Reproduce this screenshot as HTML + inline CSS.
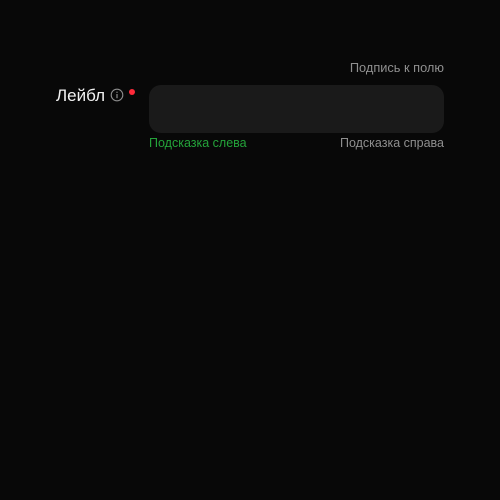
<!DOCTYPE html>
<html><head><meta charset="utf-8"><style>
html,body{margin:0;padding:0;background:#080808;width:500px;height:500px;overflow:hidden;font-family:"Liberation Sans","DejaVu Sans",sans-serif;}
.t{position:absolute;white-space:nowrap;}
</style></head><body>
<div class="t" style="right:56px;top:60px;font-size:12.8px;color:#8f8f8f;">Подпись к полю</div>
<div class="t" style="left:56px;top:86px;font-size:17px;color:#f2f2f2;">Лейбл</div>
<svg style="position:absolute;left:110px;top:88px" width="14" height="14" viewBox="0 0 14 14"><circle cx="7" cy="7" r="5.8" fill="none" stroke="#8c8c8c" stroke-width="1.1"/><rect x="6.4" y="6" width="1.2" height="4.2" fill="#8c8c8c"/><rect x="6.4" y="3.7" width="1.2" height="1.2" fill="#8c8c8c"/></svg>
<div style="position:absolute;left:129px;top:89px;width:6px;height:6px;border-radius:50%;background:#ff2a3a"></div>
<div style="position:absolute;left:149px;top:85px;width:295px;height:48px;border-radius:12px;background:#1a1a1a"></div>
<div class="t" style="left:149px;top:136px;font-size:12.5px;color:#24a33a;">Подсказка слева</div>
<div class="t" style="right:56px;top:136px;font-size:12.5px;color:#8f8f8f;">Подсказка справа</div>
</body></html>
